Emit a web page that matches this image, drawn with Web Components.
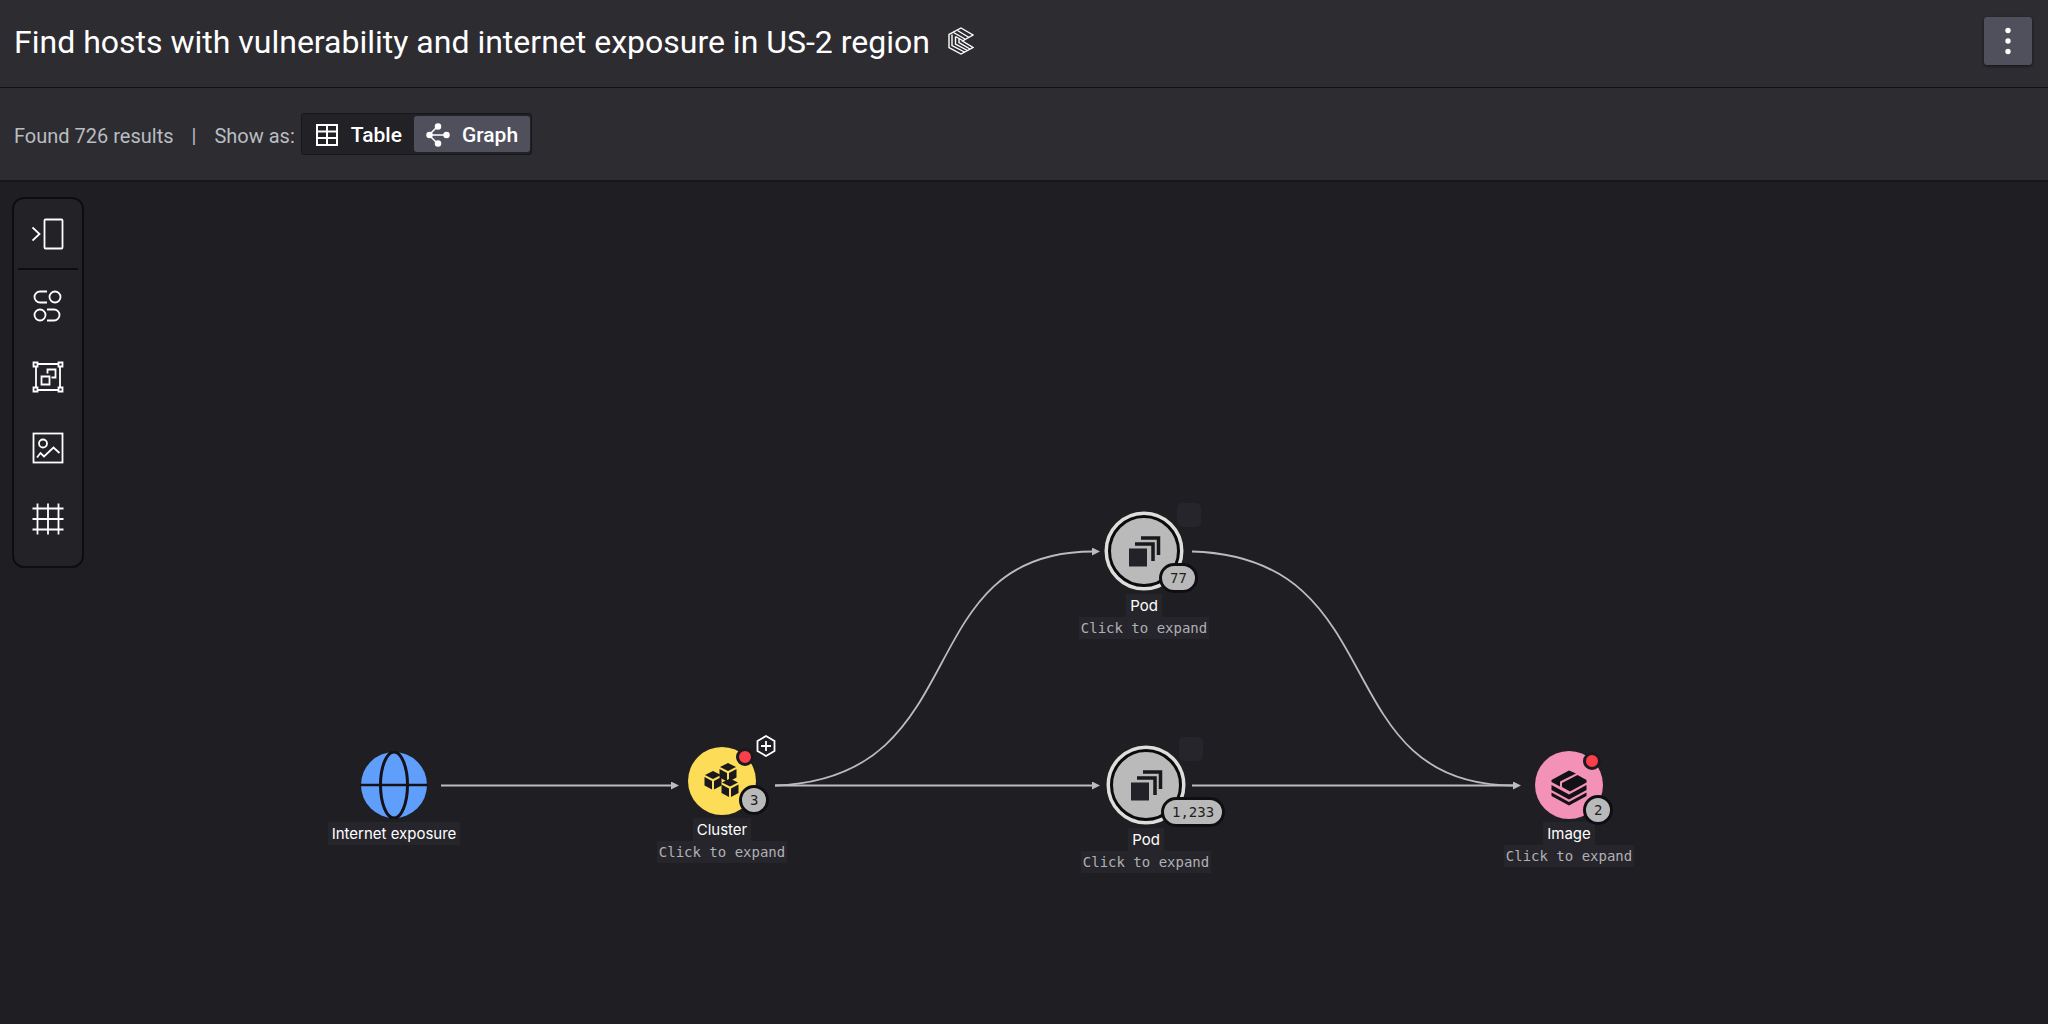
<!DOCTYPE html>
<html lang="en">
<head>
<meta charset="utf-8">
<title>Find hosts with vulnerability and internet exposure in US-2 region</title>
<style>
    body {
        margin: 0;
        background: #1f1e23;
        color: #fff;
        font-family: Roboto, "Liberation Sans", sans-serif;
    }
</style>
</head>
<body>
<query-page>
    <page-header slot="header">Find hosts with vulnerability and internet exposure in US-2 region</page-header>
    <results-bar slot="bar" count="726"></results-bar>
    <graph-canvas>
        <tool-rail slot="tools"></tool-rail>
        <graph-node kind="internet" style="--x: 394px; --y: 603px">Internet exposure</graph-node>
        <graph-node kind="cluster" count="3" alert expandable style="--x: 722px; --y: 599px">Cluster</graph-node>
        <graph-node kind="pod" count="77" expandable style="--x: 1144px; --y: 369px">Pod</graph-node>
        <graph-node kind="pod" count="1,233" expandable style="--x: 1146px; --y: 603px">Pod</graph-node>
        <graph-node kind="image" count="2" alert expandable style="--x: 1569px; --y: 603px">Image</graph-node>
    </graph-canvas>
</query-page>

<script>
const ICONS = {
    panel: `<rect x="12.5" y="1.5" width="18" height="29" rx="1"/><path d="M.5 9.5l7 6.5-7 6.5"/>`,
    links: `<path d="M15 1.5H8a5.5 5.5 0 0 0 0 11h7M15 19.5h7a5.5 5.5 0 0 1 0 11h-7"/><circle cx="23" cy="7" r="5.5"/><circle cx="8" cy="25" r="5.5"/>`,
    frame: `<path d="M5.5 3h21M5.5 29h21M4 5v22M28 5v22"/><path d="M1.5 1.5h4v4h-4zM26.5 1.5h4v4h-4zM1.5 26.5h4v4h-4zM26.5 26.5h4v4h-4z"/><path d="M9.5 15.5h8v8h-8zM15.5 12.5v-4h8v8h-4"/>`,
    picture: `<rect x="1.5" y="1.5" width="29" height="29"/><circle cx="11" cy="11.5" r="4"/><path d="M5 25.5l3.5-4.5 3.5 3.5 9.5-9 6 5.5"/>`,
    grid: `<path d="M5.5 .5v31M16 .5v31M26.5 .5v31M.5 5.5h31M.5 16h31M.5 26.5h31"/>`
};

const NODE_ART = {
    internet: `
        <circle cx="34" cy="34" r="33" fill="#609efb"/>
        <path d="M0 34h68" stroke="#141216" stroke-width="2.5"/>
        <ellipse cx="34" cy="34" rx="13.5" ry="33" fill="none" stroke="#141216" stroke-width="3"/>`,
    cluster: `
        <circle cx="34" cy="34" r="34" fill="#fddc58"/>
        <g fill="#1a191f">
            <path d="M40 16l8 4-8 4-8-4zM31.5 22l7.5 4v8.5l-7.5-4zM48.5 22v8.5l-7.5 4V26z"/>
            <path d="M25 24l8 4-8 4-8-4zM16.5 30l7.5 4v8.5l-7.5-4zM33.5 30v8.5l-7.5 4V34z"/>
            <path d="M42 31.500l8 4-8 4-8-4zM33.5 37.5l7.5 4V50l-7.5-4zM50.5 37.5V46L43 50v-8.5z"/>
        </g>`,
    pod: `
        <circle cx="40" cy="40" r="37.5" fill="#bababa" stroke="#dededa" stroke-width="4"/>
        <circle cx="40" cy="40" r="34.5" fill="#bababa" stroke="#0b0a0d" stroke-width="3"/>
        <path d="M25 37.5h18v18H25z" fill="#232228"/>
        <path d="M31 33h18v17M37 27h17.5v17" fill="none" stroke="#19181d" stroke-width="3.5"/>`,
    image: `
        <circle cx="34" cy="34" r="34" fill="#f391b7"/>
        <g fill="#121116">
            <path d="M34 19.5l7 3-16 8v5L16.5 31v-2z"/>
            <path d="M42.5 24l9 5v2.5L35 40.5l-8-4.5v-4z"/>
            <path d="M16.5 34L34 43.5 51.5 34v5L34 48.5 16.5 39z"/>
            <path d="M16.5 41.5L34 51l17.5-9.5v3.5L34 54.5 16.5 45z"/>
        </g>`
};

class BaseElement extends HTMLElement {
    constructor() {
        super();
        this.attachShadow({mode: "open"});
    }

    connectedCallback() {
        const template = document.createElement("template");
        template.innerHTML = `<style>${this.getStyles()}</style>${this.getTemplate()}`;
        this.shadowRoot.appendChild(template.content.cloneNode(true));
    }
}

class QueryPage extends BaseElement {
    getTemplate() {
        return `
            <slot name="header"></slot>
            <slot name="bar"></slot>
            <main><slot></slot></main>
        `;
    }

    getStyles() {
        return `
            :host {
                display: flex;
                flex-direction: column;
                min-height: 100vh;
            }
            main {
                display: flex;
                flex: 1;
            }
        `;
    }
}
customElements.define("query-page", QueryPage);

class PageHeader extends BaseElement {
    getTemplate() {
        return `
            <h1><slot></slot></h1>
            <svg class="logo" viewBox="0 0 26 28" width="26" height="28" aria-hidden="true">
                <path d="M13 1l12 7-10.5 6L25 20.5 13 27 1 20.5V7.5z"/>
                <path d="M9.5 3.5l11.5 7M5.5 5.5L17 12M4 7.5v11L16.5 25M7.5 9.5v7.5l12 6.5M11 11.5v4l11 6.5M7.5 9.5l7 4"/>
            </svg>
            <button type="button" aria-label="More actions">
                <svg viewBox="0 0 48 48" width="48" height="48">
                    <circle cx="24" cy="13.5" r="2.7"/><circle cx="24" cy="24" r="2.7"/><circle cx="24" cy="34.5" r="2.7"/>
                </svg>
            </button>
        `;
    }

    getStyles() {
        return `
            :host {
                display: flex;
                align-items: center;
                gap: 18px;
                height: 82px;
                padding: 0 16px 5px 14px;
                background: #2d2c31;
                border-bottom: 1px solid #111014;
            }
            h1 {
                margin: 0;
                padding-top: 2px;
                font-size: 32px;
                font-weight: 400;
                line-height: 40px;
            }
            .logo {
                fill: none;
                stroke: #fff;
                stroke-width: 1.4;
            }
            button {
                display: block;
                width: 48px;
                height: 48px;
                margin-left: auto;
                padding: 0;
                border: 0;
                border-radius: 3px;
                background: #504f5c;
                box-shadow: 0 1px 3px #141317;
            }
            button svg {
                display: block;
                fill: #fff;
            }
        `;
    }
}
customElements.define("page-header", PageHeader);

class ResultsBar extends BaseElement {
    getTemplate() {
        return `
            <span>Found ${this.getAttribute("count")} results</span>
            <span>|</span>
            <div class="show">
                <span id="show-as">Show as:</span>
                <div class="switch" role="group" aria-labelledby="show-as">
                    <button type="button" aria-pressed="false">
                        <svg viewBox="0 0 24 24" width="24" height="24" fill="none" stroke="#fff" stroke-width="2">
                            <path d="M2 2h20v20H2zM12 2v20M2 8.5h20M2 15h20"/>
                        </svg>
                        Table
                    </button>
                    <button type="button" aria-pressed="true">
                        <svg viewBox="0 0 24 24" width="24" height="24" fill="#fff" stroke="#fff" stroke-width="1.5">
                            <path d="M3 12h18M3 12l9-9M3 12l9 9"/>
                            <circle cx="3.5" cy="12" r="2.5"/><circle cx="20.5" cy="12" r="2.5"/>
                            <circle cx="12" cy="3.5" r="2.5"/><circle cx="12" cy="20.5" r="2.5"/>
                        </svg>
                        Graph
                    </button>
                </div>
            </div>
        `;
    }

    getStyles() {
        return `
            :host {
                display: flex;
                align-items: center;
                gap: 18px;
                height: 92px;
                padding: 0 14px;
                background: #2d2c31;
                border-bottom: 2px solid #17161a;
                color: #b9bdc2;
                font-size: 20px;
                line-height: 24px;
            }
            span {
                padding-top: 4px;
            }
            .show {
                display: flex;
                align-items: center;
                gap: 6px;
            }
            .switch {
                display: flex;
                padding: 2px 1px;
                border: 1px solid #17161a;
                border-radius: 3px;
                background: #222126;
            }
            button {
                display: flex;
                align-items: center;
                gap: 12px;
                height: 36px;
                padding: 2px 12px 0;
                border: 0;
                border-radius: 3px;
                background: none;
                color: #fff;
                font: 500 21px/24px Roboto, "Liberation Sans", sans-serif;
            }
            button[aria-pressed="true"] {
                background: #504f5c;
            }
        `;
    }
}
customElements.define("results-bar", ResultsBar);

class ToolRail extends BaseElement {
    getTemplate() {
        const tools = [
            ["panel", "Open panel"],
            ["links", "Change layout"],
            ["frame", "Group nodes"],
            ["picture", "Export image"],
            ["grid", "Toggle grid"]
        ];
        return tools.map(([icon, label]) => `
            <button type="button" aria-label="${label}">
                <svg viewBox="0 0 32 32" width="32" height="32">${ICONS[icon]}</svg>
            </button>
        `).join("");
    }

    getStyles() {
        return `
            :host {
                display: flex;
                flex-direction: column;
                box-sizing: border-box;
                width: 72px;
                padding: 0 4px 12px;
                border: 2px solid #0e0d11;
                border-radius: 12px;
                background: #232227;
            }
            button {
                display: grid;
                place-items: center;
                box-sizing: border-box;
                height: 71px;
                padding: 0;
                border: 0;
                background: none;
            }
            button:first-of-type {
                border-bottom: 2px solid #0e0d11;
            }
            svg {
                fill: none;
                stroke: #fff;
                stroke-width: 1.8;
            }
        `;
    }
}
customElements.define("tool-rail", ToolRail);

class GraphCanvas extends BaseElement {
    getTemplate() {
        return `
            <svg class="edges" aria-hidden="true">
                <defs>
                    <marker id="arrow" viewBox="0 0 8 8" refX="1" refY="4" markerWidth="8" markerHeight="8" markerUnits="userSpaceOnUse">
                        <path d="M0 0l8 4-8 4z" fill="#b9bdbf"/>
                    </marker>
                </defs>
                <path d="M441 603.5H672"/>
                <path d="M775 603.5H1093"/>
                <path d="M1192 603.5H1514"/>
                <path d="M775 603.5C978 597 906 369.5 1093 369.5"/>
                <path class="plain" d="M1192 369.5C1396 375 1324 603.5 1514 603.5"/>
            </svg>
            <slot name="tools"></slot>
            <slot></slot>
        `;
    }

    getStyles() {
        return `
            :host {
                display: flex;
                flex: 1;
                align-items: flex-start;
                position: relative;
                min-height: 700px;
                padding: 15px 12px;
                box-sizing: border-box;
            }
            .edges {
                position: absolute;
                inset: 0;
                width: 100%;
                height: 100%;
            }
            .edges > path {
                fill: none;
                stroke: #b9bdbf;
                stroke-width: 1.8;
                marker-end: url(#arrow);
            }
            .edges > .plain {
                marker-end: none;
            }
        `;
    }
}
customElements.define("graph-canvas", GraphCanvas);

class GraphNode extends BaseElement {
    getTemplate() {
        const kind = this.getAttribute("kind");
        const count = this.getAttribute("count");
        const size = kind === "pod" ? 80 : 68;
        return `
            <div class="shape">
                <svg viewBox="0 0 ${size} ${size}" width="${size}" height="${size}" aria-hidden="true">${NODE_ART[kind]}</svg>
                ${this.hasAttribute("alert") ? `<i class="alert"></i>` : ""}
                ${kind === "pod" ? `<i class="pin"></i>` : ""}
                ${kind === "cluster" ? `
                    <svg class="plus" viewBox="0 0 20 22" width="20" height="22" aria-hidden="true">
                        <path d="M10 1l8.5 5v10L10 21l-8.5-5V6zM10 6v10M5 11h10"/>
                    </svg>` : ""}
                ${count ? `<span class="count">${count}</span>` : ""}
            </div>
            <span class="name"><slot></slot></span>
            ${this.hasAttribute("expandable") ? `<button type="button">Click to expand</button>` : ""}
        `;
    }

    getStyles() {
        return `
            :host {
                --r: 34px;
                --count-x: 51px;
                --count-y: 47px;
                --alert-x: 51px;
                display: flex;
                flex-direction: column;
                align-items: center;
                position: absolute;
                left: calc(var(--x) - 80px);
                top: calc(var(--y) - var(--r));
                width: 160px;
            }
            :host([kind="pod"]) {
                --r: 40px;
                --count-x: 58px;
                --count-y: 55px;
            }
            :host([kind="cluster"]) {
                --count-x: 54px;
                --count-y: 41px;
                --alert-x: 51px;
            }
            .shape {
                position: relative;
                margin-bottom: 3px;
            }
            .shape svg {
                display: block;
            }
            .alert, .pin, .count, .shape .plus {
                position: absolute;
            }
            .alert {
                left: calc(var(--alert-x) - 3px);
                top: 1px;
                width: 12px;
                height: 12px;
                border: 3px solid #1b1a20;
                border-radius: 50%;
                background: #fb3f4a;
            }
            .pin {
                left: 73px;
                top: -8px;
                width: 24px;
                height: 24px;
                border-radius: 5px;
                background: #26252b;
            }
            .shape .plus {
                left: 68px;
                top: -12px;
                fill: none;
                stroke: #fff;
                stroke-width: 1.8;
            }
            .count {
                left: calc(var(--count-x) - 3px);
                top: calc(var(--count-y) - 3px);
                min-width: 8px;
                padding: 0 8px;
                border: 3px solid #0f0e12;
                border-radius: 15px;
                background: #b9b9b9;
                color: #1f1e23;
                font: 14px/24px "DejaVu Sans Mono", monospace;
                text-align: center;
            }
            .name, button {
                background: #26252b;
            }
            .name {
                padding: 0 4px;
                font: 15px/23px Inter, "Liberation Sans", sans-serif;
            }
            button {
                padding: 0 2px;
                border: 0;
                color: #b0b0b4;
                font: 14px/22px "DejaVu Sans Mono", monospace;
            }
        `;
    }
}
customElements.define("graph-node", GraphNode);
</script>
</body>
</html>
